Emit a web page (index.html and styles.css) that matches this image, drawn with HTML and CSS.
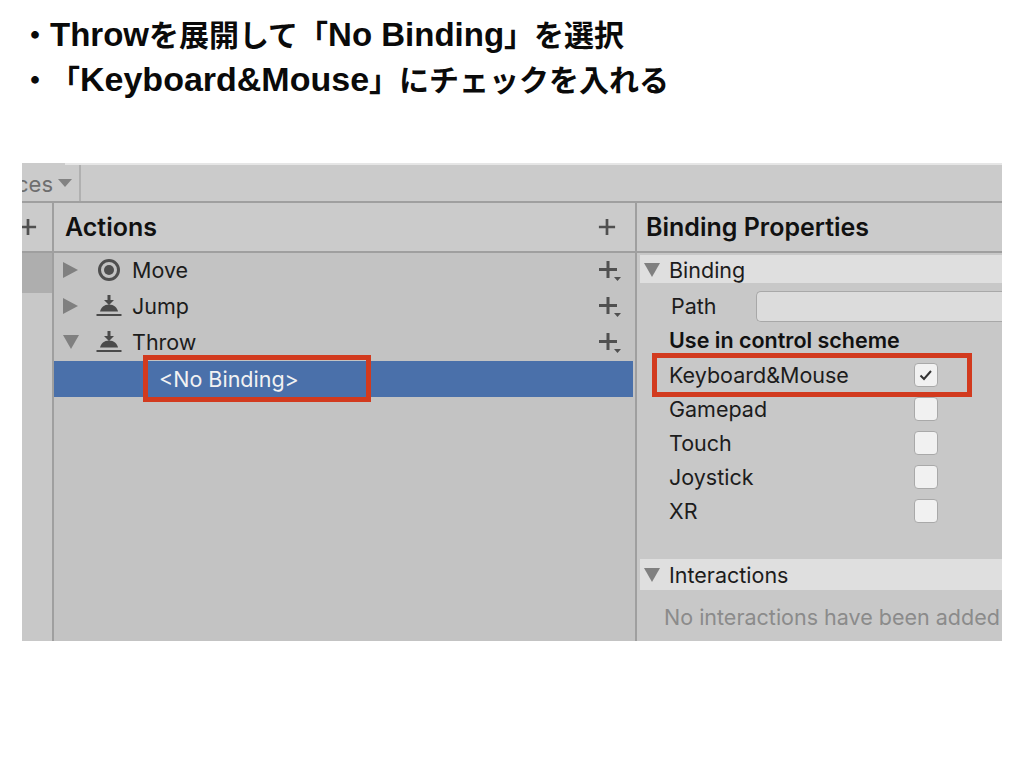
FILE: index.html
```html
<!DOCTYPE html>
<html lang="ja">
<head>
    <meta charset="UTF-8">
    <meta name="viewport" content="width=device-width, initial-scale=1.0">
    <title>Throw Binding</title>
    <link rel="stylesheet" href="styles.css">
</head>
<body>
    <svg class="defs" width="0" height="0">
        <defs>
            <symbol id="button-icon" viewBox="0 0 26 22">
                <path d="M11.500 0h3v5h3.500l-5 5-5-5h3.500z" fill="#4a4a4a"/>
                <path d="M4 16.500c1-4 4-7 9-7s8 3 9 7z" fill="#4a4a4a"/>
                <rect x="0.500" y="19" width="25" height="2" fill="#4a4a4a"/>
            </symbol>
            <symbol id="plus-menu" viewBox="0 0 24 24">
                <path d="M1 9h18v3H1zM8.500 2h3v17h-3z" fill="#505050"/>
                <path d="M16 18h7l-3.500 4z" fill="#505050"/>
            </symbol>
            <symbol id="plus" viewBox="0 0 20 20">
                <path d="M1 8.500h18v3H1zM8.500 1h3v18h-3z" fill="#505050"/>
            </symbol>
        </defs>
    </svg>

    <ul class="steps">
        <li><span class="dot">・</span><span class="latin">Throw</span>を展開して「<span class="latin">No Binding</span>」を選択</li>
        <li><span class="dot">・</span>「<span class="latin latin-wide">Keyboard&amp;Mouse</span>」にチェックを入れる</li>
    </ul>

    <div class="window">
        <div class="toolbar">
            <div class="scheme">
                <span class="scheme-name">ces</span>
                <span class="tri-small"></span>
            </div>
        </div>
        <div class="panes">
            <div class="maps">
                <div class="maps-head"><svg class="icon-plus"><use href="#plus"/></svg></div>
                <div class="maps-selected"></div>
            </div>

            <div class="actions">
                <div class="pane-head">
                    <h2>Actions</h2>
                    <svg class="icon-plus"><use href="#plus"/></svg>
                </div>
                <div class="tree">
                    <div class="tree-row">
                        <span class="tri tri-right"></span>
                        <svg class="action-icon" viewBox="0 0 26 24">
                            <circle cx="13" cy="12" r="9.500" fill="none" stroke="#4f4f4f" stroke-width="3"/>
                            <circle cx="13" cy="12" r="5" fill="#4f4f4f"/>
                        </svg>
                        <span class="tree-label">Move</span>
                        <svg class="icon-plus-menu"><use href="#plus-menu"/></svg>
                    </div>
                    <div class="tree-row">
                        <span class="tri tri-right"></span>
                        <svg class="action-icon"><use href="#button-icon"/></svg>
                        <span class="tree-label">Jump</span>
                        <svg class="icon-plus-menu"><use href="#plus-menu"/></svg>
                    </div>
                    <div class="tree-row">
                        <span class="tri tri-down"></span>
                        <svg class="action-icon"><use href="#button-icon"/></svg>
                        <span class="tree-label">Throw</span>
                        <svg class="icon-plus-menu"><use href="#plus-menu"/></svg>
                    </div>
                    <div class="binding-row">
                        <span class="binding-label">&lt;No Binding&gt;</span>
                        <span class="callout callout-binding"></span>
                    </div>
                </div>
            </div>

            <div class="props">
                <div class="pane-head props-head">
                    <h2>Binding Properties</h2>
                </div>
                <div class="foldout foldout-first">
                    <span class="tri tri-down"></span>
                    <span>Binding</span>
                </div>
                <div class="path-row">
                    <span class="path-label">Path</span>
                    <span class="path-field"></span>
                </div>
                <div class="scheme-title">Use in control scheme</div>
                <div class="check-row">
                    <span class="check-label">Keyboard&amp;Mouse</span>
                    <span class="checkbox">
                        <svg viewBox="0 0 16 16" width="16" height="16"><path d="M2.500 8.500l3.500 3.500 7-8" fill="none" stroke="#333" stroke-width="2"/></svg>
                    </span>
                    <span class="callout callout-check"></span>
                </div>
                <div class="check-row"><span class="check-label">Gamepad</span><span class="checkbox"></span></div>
                <div class="check-row"><span class="check-label">Touch</span><span class="checkbox"></span></div>
                <div class="check-row"><span class="check-label">Joystick</span><span class="checkbox"></span></div>
                <div class="check-row"><span class="check-label">XR</span><span class="checkbox"></span></div>
                <div class="foldout foldout-second">
                    <span class="tri tri-down"></span>
                    <span>Interactions</span>
                </div>
                <div class="empty-note">No interactions have been added</div>
            </div>
        </div>
    </div>
</body>
</html>
```

FILE: styles.css
```css
body { margin: 0; background-color: #fff; font-family: Inter, "Noto Sans CJK JP", sans-serif; color: #111; }
.defs { display: block; height: 0; }

.steps { list-style: none; margin: 0; padding: 13px 0 0 20px; height: 150px; box-sizing: border-box; font-family: "Liberation Sans", "Noto Sans CJK JP", sans-serif; font-size: 30px; font-weight: bold; color: #0a0a0a; }
.steps li { height: 44px; line-height: 44px; white-space: nowrap; }
.dot { display: inline-block; width: 30px; }
.latin { font-size: 33px; }
.latin-wide { font-size: 34px; }

.window { width: 980px; height: 478px; margin: 13px 0 0 22px; background-color: #c8c8c8; overflow: hidden; font-size: 21.5px; }

.toolbar { height: 36px; padding-top: 2px; background: linear-gradient(to right, #cbcbcb 43px, #e6e6e6 43px) top / 100% 2px no-repeat, #cbcbcb; border-bottom: 2px solid #9f9f9f; }
.scheme { width: 57px; height: 36px; display: flex; align-items: center; border-right: 2px solid #b0b0b0; overflow: hidden; }
.scheme-name { color: #6e6e6e; margin-left: -6px; font-size: 22px; padding-top: 2px; }
.tri-small { width: 0; height: 0; border-left: 7px solid transparent; border-right: 7px solid transparent; border-top: 8px solid #828282; margin-left: 5px; }

.panes { display: flex; height: 438px; }

.maps { width: 30px; border-right: 2px solid #9f9f9f; flex-shrink: 0; }
.maps-head { height: 48px; border-bottom: 2px solid #9f9f9f; background-color: #cbcbcb; display: flex; align-items: center; overflow: hidden; }
.maps-head .icon-plus { margin: 0 0 0 -3px; flex-shrink: 0; }
.maps-selected { height: 40px; background-color: #aeaeae; }

.actions { width: 581px; flex-shrink: 0; display: flex; flex-direction: column; background-color: #c3c3c3; }
.pane-head { height: 48px; background-color: #cbcbcb; border-bottom: 2px solid #9f9f9f; display: flex; align-items: center; padding-left: 11px; flex-shrink: 0; }
.pane-head h2 { margin: 0; font-size: 25px; font-weight: 600; color: #111; flex: 1; white-space: nowrap; }
.icon-plus { width: 18px; height: 18px; }
.actions .pane-head .icon-plus { margin-right: 19px; }

.tree-row { height: 34px; padding-bottom: 2px; display: flex; align-items: center; color: #1c1c1c; }
.tri { width: 0; height: 0; display: block; flex-shrink: 0; }
.tri-right { border-top: 8px solid transparent; border-bottom: 8px solid transparent; border-left: 15px solid #808080; }
.tri-down { border-left: 8px solid transparent; border-right: 8px solid transparent; border-top: 14px solid #808080; }
.tree-row .tri { margin-left: 9px; }
.action-icon { width: 26px; height: 24px; margin-left: 18px; flex-shrink: 0; }
.tree-row .tri-down + .action-icon { margin-left: 17px; }
.tree-label { margin-left: 10px; flex: 1; }
.icon-plus-menu { width: 24px; height: 24px; margin: 1px 13px 0 0; }

.binding-row { height: 36px; margin-right: 2px; background-color: #4a70aa; color: #f2f2f2; display: flex; align-items: center; padding-left: 105px; position: relative; }
.callout { position: absolute; border: 5px solid #d23a1e; box-sizing: border-box; }
.callout-binding { left: 89px; top: -6px; width: 228px; height: 47px; }

.props { flex: 1; border-left: 2px solid #9f9f9f; overflow: hidden; min-width: 0; background-color: #c8c8c8; }
.props-head { padding-left: 9px; margin-bottom: 2px; }
.foldout { height: 28px; margin-left: 3px; background-color: #dfdfdf; display: flex; align-items: center; color: #1c1c1c; }
.foldout .tri { margin-left: 4px; margin-right: 9px; }
.foldout-first { height: 27px; padding-top: 1px; }
.path-row { display: flex; align-items: center; height: 32px; margin-top: 7px; }
.path-label { margin-left: 34px; width: 85px; flex-shrink: 0; color: #1c1c1c; }
.path-field { flex: 1; height: 29px; background-color: #dcdcdc; border: 1px solid #a8a8a8; border-right: none; border-radius: 5px 0 0 5px; }
.scheme-title { margin: 4px 0 4px 32px; height: 28px; line-height: 28px; font-weight: 600; color: #111; white-space: nowrap; }
.check-row { height: 34px; display: flex; align-items: center; position: relative; color: #1c1c1c; }
.check-label { margin-left: 32px; width: 245px; flex-shrink: 0; }
.checkbox { width: 22px; height: 22px; background-color: #f1f1f1; border: 1px solid #a9a9a9; border-radius: 4px; display: flex; align-items: center; justify-content: center; flex-shrink: 0; }
.callout-check { left: 15px; top: -5px; width: 320px; height: 44px; }
.foldout-second { margin-top: 31px; height: 31px; }
.empty-note { margin: 14px 0 0 27px; color: #8b8b8b; white-space: nowrap; }
```
